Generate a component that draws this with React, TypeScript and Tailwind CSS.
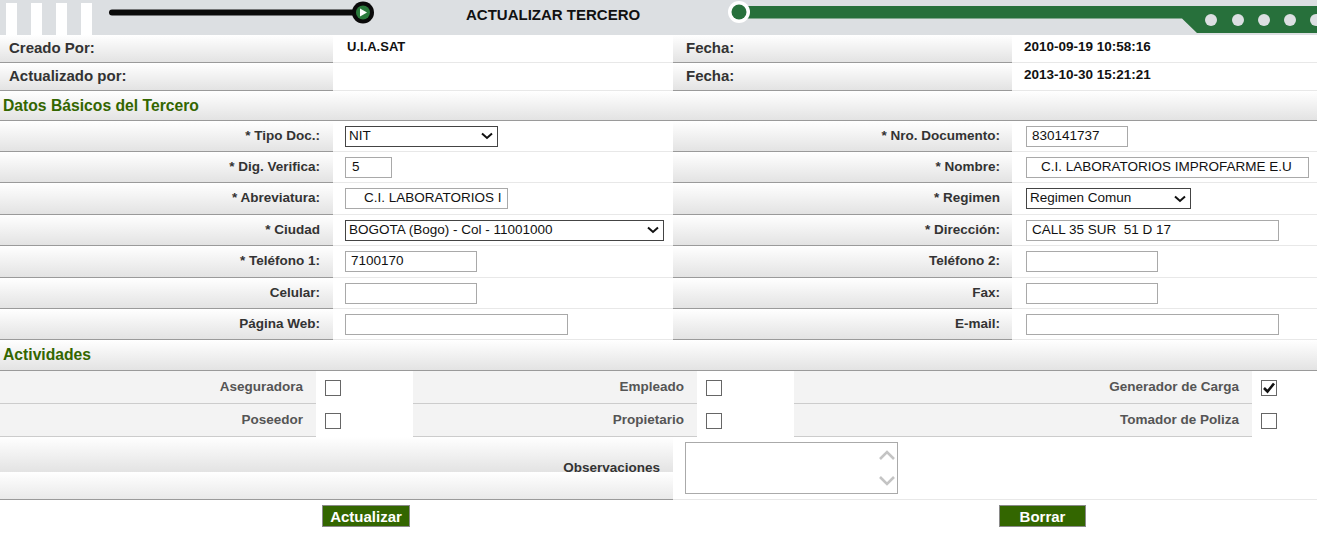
import React from "react";

const font = "font-['Liberation_Sans',Arial,sans-serif]";

function HeaderArt() {
  return (
    <svg
      className="absolute inset-0"
      width="1317"
      height="35"
      viewBox="0 0 1317 35"
    >
      <rect x="0" y="0" width="1317" height="35" fill="#dcdfe2" />
      {[6, 31, 56, 81].map((x) => (
        <rect key={x} x={x} y="3" width="11" height="32" fill="#ffffff" />
      ))}
      <line
        x1="112"
        y1="12.5"
        x2="360"
        y2="12.5"
        stroke="#0a0a0a"
        strokeWidth="6"
        strokeLinecap="round"
      />
      <circle cx="363" cy="12.5" r="11" fill="#0a0a0a" />
      <circle cx="363" cy="12.5" r="7" fill="#2a7a3c" />
      <polygon points="360,8.5 360,16.5 367,12.5" fill="#ffffff" />
      <polygon
        points="744,6 1317,6 1317,33 1197,33 1182,18.5 744,18.5"
        fill="#27703b"
      />
      <circle cx="739" cy="12" r="11" fill="#ffffff" />
      <circle cx="739" cy="12" r="7.5" fill="#27703b" />
      {[1211, 1238, 1264, 1290, 1316].map((x) => (
        <circle key={x} cx={x} cy="20" r="6" fill="#dcdfe2" />
      ))}
    </svg>
  );
}

function Chevron() {
  return (
    <svg width="12" height="8" viewBox="0 0 12 8">
      <path d="M1 1.5 L6 6 L11 1.5" fill="none" stroke="#111" strokeWidth="2" />
    </svg>
  );
}

function TextBox({ w, value = "", pad = "pl-[5px]" }: { w: string; value?: string; pad?: string }) {
  return (
    <div
      className={`${w} ${pad} h-[21px] border border-[#a9a9a9] bg-white flex items-center text-[13.5px] text-[#111] whitespace-pre overflow-hidden`}
    >
      {value}
    </div>
  );
}

function SelectBox({ w, value }: { w: string; value: string }) {
  return (
    <div
      className={`${w} h-[21px] border border-[#444] bg-white flex items-center justify-between pl-[3px] pr-[4px] text-[13.5px] text-[#111]`}
    >
      <span className="whitespace-nowrap">{value}</span>
      <Chevron />
    </div>
  );
}

function CheckBox({ checked = false }: { checked?: boolean }) {
  return (
    <div className="w-[16px] h-[16px] border border-[#666] bg-white flex items-center justify-center">
      {checked && (
        <svg width="14" height="14" viewBox="0 0 14 14">
          <path d="M2 7 L5.5 10.5 L12 2.5" fill="none" stroke="#111" strokeWidth="2.6" />
        </svg>
      )}
    </div>
  );
}

const labelBg =
  "bg-[linear-gradient(to_bottom,#ffffff,#e3e3e3)] border-b border-[#9a9a9a]";

function FormRow({
  h,
  leftLabel,
  left,
  rightLabel,
  right,
}: {
  h: string;
  leftLabel: string;
  left: React.ReactNode;
  rightLabel: string;
  right: React.ReactNode;
}) {
  return (
    <div className={`flex ${h}`}>
      <div className={`w-[333px] ${labelBg} flex items-center justify-end pr-[13px] text-[13.5px] font-bold text-[#333]`}>
        {leftLabel}
      </div>
      <div className="w-[340px] border-b border-[#e8e8e8] flex items-center pl-[12px]">
        {left}
      </div>
      <div className={`w-[339px] ${labelBg} flex items-center justify-end pr-[12px] text-[13.5px] font-bold text-[#333]`}>
        {rightLabel}
      </div>
      <div className="flex-1 border-b border-[#e8e8e8] flex items-center pl-[14px]">
        {right}
      </div>
    </div>
  );
}

function ActivityRow({ items }: { items: { label: string; w: string; box: string; checked?: boolean }[] }) {
  return (
    <div className="flex h-[33px]">
      {items.map((it) => (
        <React.Fragment key={it.label}>
          <div className={`${it.w} bg-[#f3f3f3] border-b border-[#cccccc] flex items-center justify-end pr-[13px] text-[13.5px] font-bold text-[#555]`}>
            {it.label}
          </div>
          <div className={`${it.box} bg-white flex items-center pl-[9px]`}>
            <CheckBox checked={it.checked} />
          </div>
        </React.Fragment>
      ))}
    </div>
  );
}

export default function App() {
  return (
    <div className={`w-[1317px] h-[537px] bg-white overflow-hidden ${font}`}>
      {/* Banner */}
      <div className="relative h-[35px] flex items-center pl-[466px]">
        <HeaderArt />
        <span className="relative text-[15px] font-bold text-[#111] -mt-[4px]">
          ACTUALIZAR TERCERO
        </span>
      </div>

      {/* Audit rows */}
      {[
        ["Creado Por:", "U.I.A.SAT", "2010-09-19 10:58:16"],
        ["Actualizado por:", "", "2013-10-30 15:21:21"],
      ].map(([label, user, date]) => (
        <div key={label} className="flex h-[28px]">
          <div className={`w-[333px] ${labelBg} flex items-center pl-[9px] text-[15px] font-bold text-[#333]`}>
            {label}
          </div>
          <div className="w-[340px] border-b border-[#e8e8e8] flex items-center pl-[14px] text-[13px] font-bold text-[#111] pb-[3px]">
            {user}
          </div>
          <div className={`w-[339px] ${labelBg} flex items-center pl-[13px] text-[15px] font-bold text-[#333]`}>
            Fecha:
          </div>
          <div className="flex-1 border-b border-[#e8e8e8] flex items-center pl-[12px] text-[13.5px] font-bold text-[#111] pb-[3px]">
            {date}
          </div>
        </div>
      ))}

      {/* Section: basic data */}
      <div className={`h-[30px] ${labelBg} flex items-center pl-[3px] text-[15.7px] font-bold text-[#336600]`}>
        Datos Básicos del Tercero
      </div>

      <FormRow
        h="h-[31px]"
        leftLabel="* Tipo Doc.:"
        left={<SelectBox w="w-[153px]" value="NIT" />}
        rightLabel="* Nro. Documento:"
        right={<TextBox w="w-[102px]" value="830141737" />}
      />
      <FormRow
        h="h-[31px]"
        leftLabel="* Dig. Verifica:"
        left={<TextBox w="w-[47px]" value="5" pad="pl-[6px]" />}
        rightLabel="* Nombre:"
        right={<TextBox w="w-[283px]" value="C.I. LABORATORIOS IMPROFARME E.U" pad="pl-[14px]" />}
      />
      <FormRow
        h="h-[32px]"
        leftLabel="* Abreviatura:"
        left={<TextBox w="w-[163px]" value="C.I. LABORATORIOS I" pad="pl-[18px]" />}
        rightLabel="* Regimen"
        right={<SelectBox w="w-[165px]" value="Regimen Comun" />}
      />
      <FormRow
        h="h-[31px]"
        leftLabel="* Ciudad"
        left={<SelectBox w="w-[319px]" value="BOGOTA (Bogo) - Col - 11001000" />}
        rightLabel="* Dirección:"
        right={<TextBox w="w-[253px]" value="CALL 35 SUR  51 D 17" />}
      />
      <FormRow
        h="h-[32px]"
        leftLabel="* Teléfono 1:"
        left={<TextBox w="w-[132px]" value="7100170" />}
        rightLabel="Teléfono 2:"
        right={<TextBox w="w-[132px]" />}
      />
      <FormRow
        h="h-[31px]"
        leftLabel="Celular:"
        left={<TextBox w="w-[132px]" />}
        rightLabel="Fax:"
        right={<TextBox w="w-[132px]" />}
      />
      <FormRow
        h="h-[31px]"
        leftLabel="Página Web:"
        left={<TextBox w="w-[223px]" />}
        rightLabel="E-mail:"
        right={<TextBox w="w-[253px]" />}
      />

      {/* Section: activities */}
      <div className={`h-[31px] ${labelBg} flex items-center pl-[3px] text-[15.7px] font-bold text-[#336600]`}>
        Actividades
      </div>
      <ActivityRow
        items={[
          { label: "Aseguradora", w: "w-[316px]", box: "w-[97px]" },
          { label: "Empleado", w: "w-[284px]", box: "w-[97px]" },
          { label: "Generador de Carga", w: "w-[458px]", box: "flex-1", checked: true },
        ]}
      />
      <ActivityRow
        items={[
          { label: "Poseedor", w: "w-[316px]", box: "w-[97px]" },
          { label: "Propietario", w: "w-[284px]", box: "w-[97px]" },
          { label: "Tomador de Poliza", w: "w-[458px]", box: "flex-1" },
        ]}
      />

      {/* Observaciones */}
      <div className="flex h-[63px]">
        <div className="w-[673px] bg-[linear-gradient(to_bottom,#ffffff,#e3e3e3)] bg-[length:100%_35px] bg-repeat-y border-b border-[#9a9a9a] flex items-center justify-end pr-[13px] text-[13.5px] font-bold text-[#333]">
          Observaciones
        </div>
        <div className="flex-1 border-b border-[#e8e8e8] pl-[12px] pt-[5px]">
          <div className="w-[213px] h-[52px] border border-[#aaaaaa] bg-white flex justify-end">
            <div className="w-[21px] flex flex-col items-center justify-between py-[6px]">
              <svg width="18" height="12" viewBox="0 0 18 12">
                <path d="M2 10 L9 3 L16 10" fill="none" stroke="#c4c4c4" strokeWidth="2.6" />
              </svg>
              <svg width="18" height="12" viewBox="0 0 18 12">
                <path d="M2 2 L9 9 L16 2" fill="none" stroke="#c4c4c4" strokeWidth="2.6" />
              </svg>
            </div>
          </div>
        </div>
      </div>

      {/* Buttons */}
      <div className="flex pt-[5px]">
        <button className="ml-[322px] w-[88px] h-[22px] bg-[#336600] border border-[#8a8a8a] text-white text-[15px] font-bold leading-none flex items-center justify-center">
          Actualizar
        </button>
        <button className="ml-[589px] w-[87px] h-[22px] bg-[#336600] border border-[#8a8a8a] text-white text-[15px] font-bold leading-none flex items-center justify-center">
          Borrar
        </button>
      </div>
    </div>
  );
}
